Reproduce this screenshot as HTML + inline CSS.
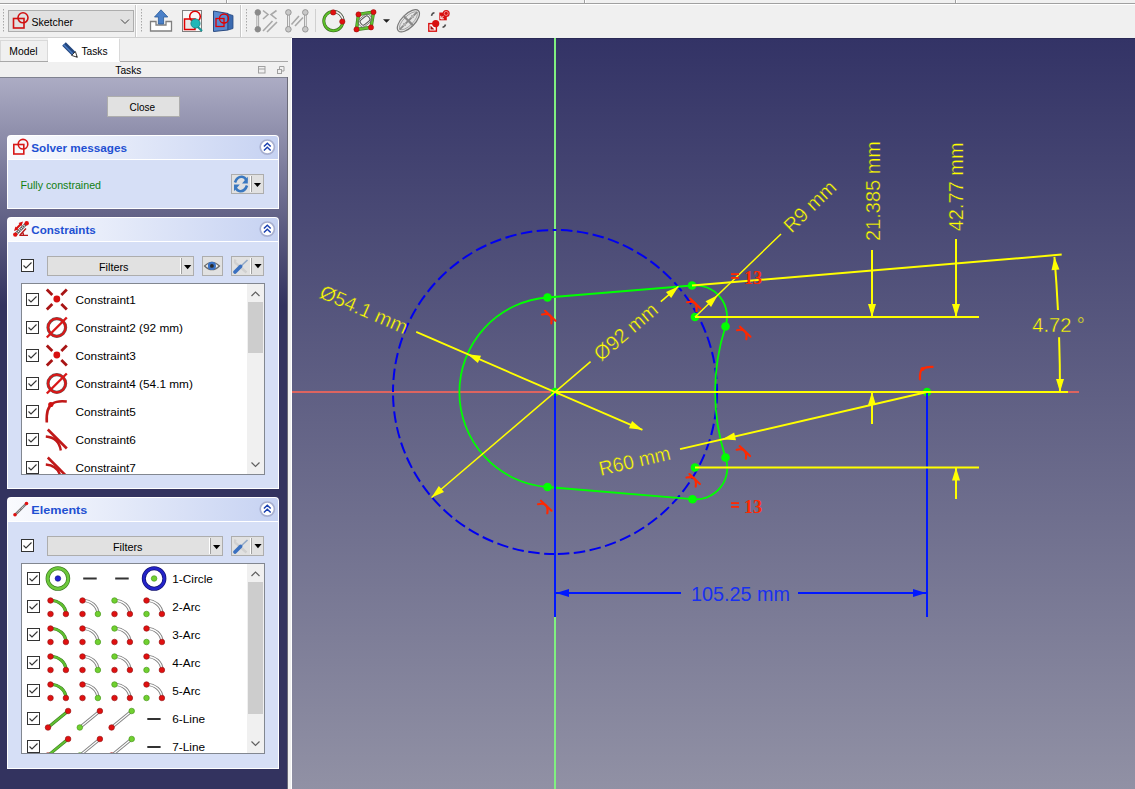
<!DOCTYPE html><html><head><meta charset="utf-8"><style>html,body{margin:0;padding:0;overflow:hidden;background:#f0f0f0}svg{display:block}text{font-family:"Liberation Sans",sans-serif}</style></head><body>
<svg width="1135" height="789" viewBox="0 0 1135 789">
<defs>
<linearGradient id="g3d" gradientUnits="userSpaceOnUse" x1="0" y1="38" x2="0" y2="854"><stop offset="0" stop-color="#333366"/><stop offset="1" stop-color="#9999aa"/></linearGradient>
<linearGradient id="gtp" gradientUnits="userSpaceOnUse" x1="0" y1="78" x2="0" y2="305"><stop offset="0" stop-color="#acacc4"/><stop offset="1" stop-color="#33335f"/></linearGradient>
<linearGradient id="ghdr" x1="0" y1="0" x2="1" y2="0"><stop offset="0" stop-color="#fafbfe"/><stop offset="1" stop-color="#c6d2f2"/></linearGradient>
</defs>
<rect x="0" y="0" width="1135" height="38" fill="#f0f0f0"/>
<rect x="0" y="3" width="1135" height="1" fill="#a0a0a0"/><rect x="0" y="4" width="1135" height="1" fill="#ffffff"/>
<rect x="226" y="0" width="1" height="3" fill="#a0a0a0"/><rect x="227" y="0" width="1" height="3" fill="#fff"/>
<rect x="584" y="0" width="1" height="3" fill="#a0a0a0"/><rect x="585" y="0" width="1" height="3" fill="#fff"/>
<rect x="955" y="0" width="1" height="3" fill="#a0a0a0"/><rect x="956" y="0" width="1" height="3" fill="#fff"/>
<rect x="0" y="37" width="292" height="1" fill="#d0d0d0"/>
<rect x="135" y="5" width="1" height="32" fill="#c8c8c8"/><rect x="136" y="5" width="1" height="32" fill="#fff"/>
<rect x="240" y="5" width="1" height="32" fill="#c8c8c8"/><rect x="241" y="5" width="1" height="32" fill="#fff"/>
<rect x="3" y="9" width="1" height="1.5" fill="#a8a8a8"/>
<rect x="3" y="12" width="1" height="1.5" fill="#a8a8a8"/>
<rect x="3" y="15" width="1" height="1.5" fill="#a8a8a8"/>
<rect x="3" y="18" width="1" height="1.5" fill="#a8a8a8"/>
<rect x="3" y="21" width="1" height="1.5" fill="#a8a8a8"/>
<rect x="3" y="24" width="1" height="1.5" fill="#a8a8a8"/>
<rect x="3" y="27" width="1" height="1.5" fill="#a8a8a8"/>
<rect x="3" y="30" width="1" height="1.5" fill="#a8a8a8"/>
<rect x="141" y="9" width="1" height="1.5" fill="#a8a8a8"/>
<rect x="141" y="12" width="1" height="1.5" fill="#a8a8a8"/>
<rect x="141" y="15" width="1" height="1.5" fill="#a8a8a8"/>
<rect x="141" y="18" width="1" height="1.5" fill="#a8a8a8"/>
<rect x="141" y="21" width="1" height="1.5" fill="#a8a8a8"/>
<rect x="141" y="24" width="1" height="1.5" fill="#a8a8a8"/>
<rect x="141" y="27" width="1" height="1.5" fill="#a8a8a8"/>
<rect x="141" y="30" width="1" height="1.5" fill="#a8a8a8"/>
<rect x="246" y="9" width="1" height="1.5" fill="#a8a8a8"/>
<rect x="246" y="12" width="1" height="1.5" fill="#a8a8a8"/>
<rect x="246" y="15" width="1" height="1.5" fill="#a8a8a8"/>
<rect x="246" y="18" width="1" height="1.5" fill="#a8a8a8"/>
<rect x="246" y="21" width="1" height="1.5" fill="#a8a8a8"/>
<rect x="246" y="24" width="1" height="1.5" fill="#a8a8a8"/>
<rect x="246" y="27" width="1" height="1.5" fill="#a8a8a8"/>
<rect x="246" y="30" width="1" height="1.5" fill="#a8a8a8"/>
<rect x="8.5" y="10.5" width="125" height="21" fill="#e1e1e1" stroke="#adadad"/>
<rect x="13.5" y="18.5" width="10.5" height="9.5" fill="none" stroke="#d01010" stroke-width="1.6"/><circle cx="23" cy="17.8" r="5" fill="none" stroke="#d01010" stroke-width="1.6"/>
<text x="31.5" y="25.8" font-size="11.5" fill="#000" textLength="41.5" lengthAdjust="spacingAndGlyphs">Sketcher</text>
<path d="M121 19.5 L125 23.5 L129 19.5" fill="none" stroke="#404040" stroke-width="1"/>
<path d="M150.5 21.5 H156 V25 H166 V21.5 H171.5 V31 H150.5 Z" fill="#fff" stroke="#808080" stroke-width="1.3"/>
<path d="M161 9.8 L167.8 17 H163.6 V24 H158.4 V17 H154.5 Z" fill="#4a80c8" stroke="#2a5a9a" stroke-width="0.8"/>
<rect x="182.5" y="10.5" width="19" height="21" fill="#f8f8f8" stroke="#808080"/>
<rect x="184.5" y="19" width="10.5" height="10.5" fill="#e8e8e8" stroke="#e00000" stroke-width="1.5"/><circle cx="195" cy="16.5" r="5.3" fill="none" stroke="#e00000" stroke-width="1.5"/>
<line x1="197" y1="26" x2="202" y2="31" stroke="#1a9a9a" stroke-width="2.2"/><circle cx="195.5" cy="23.5" r="4.6" fill="#20b8b8" stroke="#108080" stroke-width="0.8"/>
<path d="M213.5 11 L228 13.5 V30 L213.5 31.5 Z" fill="#5a8ad0" stroke="#2a4a80" stroke-width="1"/><path d="M228 14 L233 15.5 V28.5 L228 30 Z" fill="#3a6ab0" stroke="#2a4a80" stroke-width="0.8"/>
<rect x="216" y="18.5" width="8" height="8" fill="none" stroke="#e00000" stroke-width="1.3"/><circle cx="224" cy="18.5" r="4.5" fill="none" stroke="#e00000" stroke-width="1.3"/>
<line x1="257.8" y1="12.4" x2="257.8" y2="29.3" stroke="#909090" stroke-width="2.6"/><line x1="257.8" y1="12.4" x2="257.8" y2="29.3" stroke="#fafafa" stroke-width="1"/>
<circle cx="257.8" cy="12.4" r="2.8" fill="#8a8a8a" stroke="#8a8a8a" stroke-width="0.8"/><circle cx="257.8" cy="29.3" r="2.8" fill="#8a8a8a" stroke="#8a8a8a" stroke-width="0.8"/>
<path d="M263 10.5 L268 14.5 L263 19 M276.5 10.5 L271 14.5 L276.5 19" fill="none" stroke="#a8a8a8" stroke-width="1.6"/>
<path d="M263 31 L272.5 21 M267 32 L277 22" fill="none" stroke="#a8a8a8" stroke-width="1.6"/>
<line x1="288.4" y1="12.4" x2="288.4" y2="29.3" stroke="#909090" stroke-width="2.6"/><line x1="288.4" y1="12.4" x2="288.4" y2="29.3" stroke="#fafafa" stroke-width="1"/>
<circle cx="288.4" cy="12.4" r="2.8" fill="#c8c8c8" stroke="#8a8a8a" stroke-width="0.8"/><circle cx="288.4" cy="29.3" r="2.8" fill="#c8c8c8" stroke="#8a8a8a" stroke-width="0.8"/>
<line x1="305.3" y1="12.4" x2="305.3" y2="29.3" stroke="#909090" stroke-width="2.6"/><line x1="305.3" y1="12.4" x2="305.3" y2="29.3" stroke="#fafafa" stroke-width="1"/>
<circle cx="305.3" cy="12.4" r="2.8" fill="#c8c8c8" stroke="#8a8a8a" stroke-width="0.8"/><circle cx="305.3" cy="29.3" r="2.8" fill="#c8c8c8" stroke="#8a8a8a" stroke-width="0.8"/>
<path d="M291.5 24.5 L299 16 M295 26 L303 17.5" fill="none" stroke="#a8a8a8" stroke-width="1.6"/>
<rect x="315" y="9" width="1" height="23" fill="#d0d0d0"/>
<circle cx="333.4" cy="21.1" r="9.6" fill="none" stroke="#3a6a20" stroke-width="3"/><circle cx="333.4" cy="21.1" r="9.6" fill="none" stroke="#5cc028" stroke-width="1.9"/>
<path d="M333.4 11.5 A9.6 9.6 0 0 1 343 21.1" fill="none" stroke="#606060" stroke-width="2.8"/><path d="M333.4 11.5 A9.6 9.6 0 0 1 343 21.1" fill="none" stroke="#f4f4f4" stroke-width="1.5"/>
<circle cx="333.2" cy="12.4" r="2.7" fill="#e01010" stroke="#901010" stroke-width="0.5"/><circle cx="342.3" cy="21.6" r="2.7" fill="#e01010" stroke="#901010" stroke-width="0.5"/>
<path d="M358.5 14.4 L373.5 12.1 L371 27.4 L356.5 29.4 Z" fill="#f0f0f0" stroke="#3a7a20" stroke-width="3.4"/><path d="M358.5 14.4 L373.5 12.1 L371 27.4 L356.5 29.4 Z" fill="none" stroke="#60c030" stroke-width="2.2"/>
<rect x="360" y="17.5" width="10" height="6" rx="2" transform="rotate(-40 365 20.5)" fill="none" stroke="#505050" stroke-width="1"/><rect x="358" y="16" width="14" height="9" rx="3" transform="rotate(-40 365 20.5)" fill="none" stroke="#707070" stroke-width="0.8"/>
<circle cx="358.5" cy="14.4" r="2.6" fill="#e01010" stroke="#901010" stroke-width="0.5"/>
<circle cx="373.5" cy="12.1" r="2.6" fill="#e01010" stroke="#901010" stroke-width="0.5"/>
<circle cx="371" cy="27.4" r="2.6" fill="#e01010" stroke="#901010" stroke-width="0.5"/>
<circle cx="356.5" cy="29.4" r="2.6" fill="#e01010" stroke="#901010" stroke-width="0.5"/>
<path d="M383 19.2 H390 L386.5 22.7 Z" fill="#202020"/>
<ellipse cx="408.4" cy="20.8" rx="14.2" ry="6.6" transform="rotate(-45 408.4 20.8)" fill="#e4e4e4" stroke="#7a7a7a" stroke-width="1.2"/>
<ellipse cx="408.4" cy="20.8" rx="11.8" ry="4.6" transform="rotate(-45 408.4 20.8)" fill="none" stroke="#a0a0a0" stroke-width="0.9"/>
<line x1="399.5" y1="29.7" x2="417.3" y2="11.9" stroke="#8a8a8a" stroke-width="1.8"/><line x1="403.6" y1="16" x2="413.2" y2="25.6" stroke="#8a8a8a" stroke-width="2.2"/>
<rect x="403" y="23" width="3" height="3" fill="#b0b0b0"/><rect x="411" y="15" width="3" height="3" fill="#b0b0b0"/>
<rect x="428.8" y="23.6" width="7.6" height="7.6" fill="#fff" stroke="#d81010" stroke-width="1.4"/><path d="M430.5 25.5 V29.5 H434.5 Z" fill="#a01010"/><circle cx="435.7" cy="23.6" r="3.6" fill="#d81010"/>
<rect x="439.3" y="12.5" width="7.5" height="7.8" fill="#d81010"/><path d="M440.8 18.8 L444.5 15 M440.8 18.8 V15.8 M440.8 18.8 H443.8" fill="none" stroke="#fff" stroke-width="1"/><circle cx="446.2" cy="13.4" r="3.5" fill="#d81010"/><circle cx="446.2" cy="13.4" r="2" fill="none" stroke="#f4a0a0" stroke-width="0.8"/>
<path d="M431.5 15.8 Q432 13 434.5 12.8" fill="none" stroke="#505050" stroke-width="1.5"/><path d="M445.5 24.5 Q445 27 442.5 27.2" fill="none" stroke="#505050" stroke-width="1.5"/>
<rect x="0" y="38" width="292" height="751" fill="#f0f0f0"/>
<rect x="0.5" y="40.5" width="47" height="21" fill="#f0f0f0" stroke="#d9d9d9"/>
<rect x="48" y="38" width="71" height="24" fill="#ffffff"/><rect x="119" y="39" width="1" height="22" fill="#d9d9d9"/>
<rect x="0" y="61" width="48" height="1" fill="#a8a8a8"/><rect x="120" y="61" width="168" height="1" fill="#a8a8a8"/>
<text x="9.3" y="54.8" font-size="11.5" fill="#000" textLength="28.2" lengthAdjust="spacingAndGlyphs">Model</text>
<text x="81.4" y="54.8" font-size="11.5" fill="#000" textLength="26.1" lengthAdjust="spacingAndGlyphs">Tasks</text>
<path d="M64 44 L73.5 53.5" stroke="#22467e" stroke-width="5.2" stroke-linecap="butt"/><path d="M63.5 44.5 L73 54" stroke="#4a7cc4" stroke-width="1.4"/><path d="M71.6 55.4 L75.4 51.6 L77.3 57.3 Z" fill="#fff" stroke="#222" stroke-width="0.9"/><path d="M77.3 57.3 L75.8 56.6 L76.6 55.8 Z" fill="#111"/>
<text x="115.3" y="73.7" font-size="11.5" fill="#000" textLength="26.1" lengthAdjust="spacingAndGlyphs">Tasks</text>
<rect x="258.5" y="66.5" width="6.5" height="6.5" fill="none" stroke="#a0a0a0" stroke-width="1"/><rect x="258.5" y="68.5" width="6.5" height="1" fill="#a0a0a0"/>
<rect x="277.5" y="69.5" width="4" height="4" fill="none" stroke="#a0a0a0"/><path d="M279.5 69.5 V66.5 H284 V71 H281.5" fill="none" stroke="#a0a0a0"/>
<rect x="0" y="77" width="288" height="712" fill="url(#gtp)"/>
<rect x="0" y="77" width="288" height="1" fill="#7f8290"/><rect x="287" y="77" width="1" height="712" fill="#6a6a78"/>
<rect x="288" y="38" width="4" height="751" fill="#f0f0f0"/><rect x="291" y="38" width="1" height="751" fill="#ffffff"/>
<rect x="107.5" y="96.5" width="72" height="20" fill="#e1e1e1" stroke="#adadad"/>
<text x="129.5" y="111" font-size="11.5" fill="#000" textLength="25.6" lengthAdjust="spacingAndGlyphs">Close</text>
<path d="M7 209 V139 Q7 135 11 135 H275 Q279 135 279 139 V209 Z" fill="#ffffff"/>
<path d="M8 159 V139 Q8 136 11 136 H275 Q278 136 278 139 V159 Z" fill="url(#ghdr)"/>
<rect x="8" y="160" width="270" height="48" fill="#d6dff6"/>
<text x="31.3" y="152.2" font-size="11.7" font-weight="bold" fill="#1f50d2" textLength="95.6" lengthAdjust="spacingAndGlyphs">Solver messages</text>
<circle cx="267.3" cy="147.1" r="7.1" fill="#fff" stroke="#a8b0d0" stroke-width="1.7"/>
<path d="M263.9 146.5 L267.3 143.29999999999998 L270.7 146.5 M263.9 150.5 L267.3 147.29999999999998 L270.7 150.5" fill="none" stroke="#1a40b0" stroke-width="1.5"/>
<path d="M7 489 V221 Q7 217 11 217 H275 Q279 217 279 221 V489 Z" fill="#ffffff"/>
<path d="M8 241 V221 Q8 218 11 218 H275 Q278 218 278 221 V241 Z" fill="url(#ghdr)"/>
<rect x="8" y="242" width="270" height="246" fill="#d6dff6"/>
<text x="31.3" y="234.2" font-size="11.7" font-weight="bold" fill="#1f50d2" textLength="64.4" lengthAdjust="spacingAndGlyphs">Constraints</text>
<circle cx="267.3" cy="229.1" r="7.1" fill="#fff" stroke="#a8b0d0" stroke-width="1.7"/>
<path d="M263.9 228.5 L267.3 225.29999999999998 L270.7 228.5 M263.9 232.5 L267.3 229.29999999999998 L270.7 232.5" fill="none" stroke="#1a40b0" stroke-width="1.5"/>
<path d="M7 769 V501 Q7 497 11 497 H275 Q279 497 279 501 V769 Z" fill="#ffffff"/>
<path d="M8 521 V501 Q8 498 11 498 H275 Q278 498 278 501 V521 Z" fill="url(#ghdr)"/>
<rect x="8" y="522" width="270" height="246" fill="#d6dff6"/>
<text x="31.3" y="514.2" font-size="11.7" font-weight="bold" fill="#1f50d2" textLength="56" lengthAdjust="spacingAndGlyphs">Elements</text>
<circle cx="267.3" cy="509.1" r="7.1" fill="#fff" stroke="#a8b0d0" stroke-width="1.7"/>
<path d="M263.9 508.5 L267.3 505.3 L270.7 508.5 M263.9 512.5 L267.3 509.3 L270.7 512.5" fill="none" stroke="#1a40b0" stroke-width="1.5"/>
<rect x="13.8" y="144.5" width="10" height="9.5" fill="none" stroke="#d81818" stroke-width="1.6"/><circle cx="23" cy="144.2" r="4.8" fill="none" stroke="#d81818" stroke-width="1.6"/>
<text x="20.5" y="188.6" font-size="11" fill="#108010" textLength="80.5" lengthAdjust="spacingAndGlyphs">Fully constrained</text>
<rect x="231.5" y="174.5" width="32" height="19" fill="#e1e1e1" stroke="#adadad"/><rect x="250" y="176" width="1" height="16" fill="#fff"/><rect x="251" y="176" width="1" height="16" fill="#a0a0a0"/>
<path d="M253.9 182.9 H261 L257.45 187.1 Z" fill="#000"/>
<path d="M235 182.5 Q237 176.5 242 176.8 Q245 177 246.5 180.5" fill="none" stroke="#3a78c0" stroke-width="2.6"/><path d="M247.8 176.8 V183.6 H242 Z" fill="#3a78c0"/>
<path d="M247 185.5 Q245 191.5 240 191.2 Q237 191 235.5 187.5" fill="none" stroke="#3a78c0" stroke-width="2.6"/><path d="M234 191.2 V184.4 H239.8 Z" fill="#3a78c0"/>
<line x1="15.3" y1="234.6" x2="26.7" y2="223.2" stroke="#505050" stroke-width="3"/><line x1="15.3" y1="234.6" x2="26.7" y2="223.2" stroke="#fff" stroke-width="1.6" stroke-dasharray="1 1"/>
<line x1="16.5" y1="228.5" x2="21" y2="224" stroke="#d81010" stroke-width="2.2"/><path d="M14 231 L15.5 226.5 L18.5 229.5 Z M23 221.5 L18.5 223 L21.5 226 Z" fill="#d81010"/>
<circle cx="15.3" cy="234.6" r="2.2" fill="#e01010"/><circle cx="26.7" cy="223.2" r="2.2" fill="#e01010"/><path d="M19.3 235.4 H28 M19.8 235.2 L26 228.5 M23.5 235.2 Q23.5 232.5 22 231.8" fill="none" stroke="#b81818" stroke-width="1.4"/>
<line x1="15" y1="514.8" x2="26.5" y2="503.5" stroke="#707070" stroke-width="2.4"/><line x1="15" y1="514.8" x2="26.5" y2="503.5" stroke="#fff" stroke-width="0.9" stroke-dasharray="1 1"/><circle cx="15" cy="514.8" r="1.8" fill="#e01010"/><circle cx="26.5" cy="503.5" r="1.8" fill="#e01010"/>
<rect x="21.5" y="259.5" width="12" height="12" fill="#fff" stroke="#333"/>
<path d="M23.5 265.5 L26 268 L31.5 262.5" fill="none" stroke="#333" stroke-width="1.1"/>
<rect x="47.5" y="256.5" width="146" height="19" fill="#e1e1e1" stroke="#adadad"/><rect x="180" y="258" width="1" height="16" fill="#fff"/><rect x="181" y="258" width="1" height="16" fill="#a0a0a0"/>
<path d="M184 265.1 H191.3 L187.65 269.2 Z" fill="#000"/>
<text x="99" y="270.5" font-size="11.5" fill="#000" textLength="29.5" lengthAdjust="spacingAndGlyphs">Filters</text>
<rect x="202.5" y="256.5" width="20" height="19" fill="#e1e1e1" stroke="#adadad"/>
<path d="M204.5 266 Q212 258.5 219.5 266 Q212 273.5 204.5 266 Z" fill="#f8f8f4" stroke="#6a6a6a" stroke-width="1.1"/><circle cx="211.9" cy="265.9" r="4.1" fill="#3a72c4"/><circle cx="211.9" cy="265.9" r="1.9" fill="#2a2a2a"/>
<rect x="231.5" y="256.5" width="32" height="19" fill="#e1e1e1" stroke="#adadad"/>
<rect x="250" y="258" width="1" height="16" fill="#fff"/><rect x="251" y="258" width="1" height="16" fill="#a0a0a0"/>
<path d="M254.4 264.0 H261.6 L258.0 268.2 Z" fill="#000"/>
<path d="M235.5 259.5 Q234 263 237 264 L246.5 272.5" fill="none" stroke="#d0d0d0" stroke-width="2.4"/>
<line x1="240.5" y1="266.5" x2="247.5" y2="260" stroke="#90a8c8" stroke-width="1.6"/>
<line x1="235" y1="272" x2="240.5" y2="266.5" stroke="#3a70c0" stroke-width="3.8" stroke-linecap="round"/>
<rect x="21.5" y="539.5" width="12" height="12" fill="#fff" stroke="#333"/>
<path d="M23.5 545.5 L26 548 L31.5 542.5" fill="none" stroke="#333" stroke-width="1.1"/>
<rect x="47.5" y="536.5" width="175" height="19" fill="#e1e1e1" stroke="#adadad"/><rect x="209" y="538" width="1" height="16" fill="#fff"/><rect x="210" y="538" width="1" height="16" fill="#a0a0a0"/>
<path d="M213 545.1 H220.3 L216.65 549.2 Z" fill="#000"/>
<text x="113" y="550.5" font-size="11.5" fill="#000" textLength="29.5" lengthAdjust="spacingAndGlyphs">Filters</text>
<rect x="231.5" y="536.5" width="32" height="19" fill="#e1e1e1" stroke="#adadad"/>
<rect x="250" y="538" width="1" height="16" fill="#fff"/><rect x="251" y="538" width="1" height="16" fill="#a0a0a0"/>
<path d="M254.4 544.0 H261.6 L258.0 548.2 Z" fill="#000"/>
<path d="M235.5 539.5 Q234 543 237 544 L246.5 552.5" fill="none" stroke="#d0d0d0" stroke-width="2.4"/>
<line x1="240.5" y1="546.5" x2="247.5" y2="540" stroke="#90a8c8" stroke-width="1.6"/>
<line x1="235" y1="552" x2="240.5" y2="546.5" stroke="#3a70c0" stroke-width="3.8" stroke-linecap="round"/>
<rect x="21.5" y="283.5" width="243" height="191" fill="#fff" stroke="#828790"/>
<rect x="247" y="284" width="17" height="190" fill="#f0f0f0"/>
<rect x="248" y="302" width="15" height="51" fill="#cdcdcd"/>
<path d="M251.5 296 L255.5 292 L259.5 296" fill="none" stroke="#606060" stroke-width="1.2"/>
<path d="M251.5 462.5 L255.5 466.5 L259.5 462.5" fill="none" stroke="#606060" stroke-width="1.2"/>
<clipPath id="cl1"><rect x="22" y="284" width="225" height="190"/></clipPath>
<clipPath id="cl2"><rect x="22" y="564" width="225" height="189"/></clipPath>
<g clip-path="url(#cl1)">
<rect x="26.5" y="293.5" width="12" height="12" fill="#fff" stroke="#333"/>
<path d="M28.5 299.5 L31 302.0 L36.5 296.5" fill="none" stroke="#333" stroke-width="1.1"/>
<text x="75.5" y="303.9" font-size="11.8" fill="#000">Constraint1</text>
<g stroke="#a81414" stroke-width="2.8"><line x1="46.8" y1="289.5" x2="52.3" y2="295.0"/><line x1="66.8" y1="289.5" x2="61.3" y2="295.0"/><line x1="46.8" y1="309.5" x2="52.3" y2="304.0"/><line x1="66.8" y1="309.5" x2="61.3" y2="304.0"/></g><circle cx="56.8" cy="299.0" r="3.4" fill="#d81010"/>
<rect x="26.5" y="321.5" width="12" height="12" fill="#fff" stroke="#333"/>
<path d="M28.5 327.5 L31 330.0 L36.5 324.5" fill="none" stroke="#333" stroke-width="1.1"/>
<text x="75.5" y="331.9" font-size="11.8" fill="#000">Constraint2 (92 mm)</text>
<circle cx="56.8" cy="327.5" r="8.8" fill="none" stroke="#606060" stroke-width="3.2"/><circle cx="56.8" cy="327.5" r="8.8" fill="none" stroke="#d81818" stroke-width="2.2"/><line x1="46.8" y1="337.5" x2="66.8" y2="317.5" stroke="#d81818" stroke-width="2.4"/>
<rect x="26.5" y="349.5" width="12" height="12" fill="#fff" stroke="#333"/>
<path d="M28.5 355.5 L31 358.0 L36.5 352.5" fill="none" stroke="#333" stroke-width="1.1"/>
<text x="75.5" y="359.9" font-size="11.8" fill="#000">Constraint3</text>
<g stroke="#a81414" stroke-width="2.8"><line x1="46.8" y1="345.5" x2="52.3" y2="351.0"/><line x1="66.8" y1="345.5" x2="61.3" y2="351.0"/><line x1="46.8" y1="365.5" x2="52.3" y2="360.0"/><line x1="66.8" y1="365.5" x2="61.3" y2="360.0"/></g><circle cx="56.8" cy="355.0" r="3.4" fill="#d81010"/>
<rect x="26.5" y="377.5" width="12" height="12" fill="#fff" stroke="#333"/>
<path d="M28.5 383.5 L31 386.0 L36.5 380.5" fill="none" stroke="#333" stroke-width="1.1"/>
<text x="75.5" y="387.9" font-size="11.8" fill="#000">Constraint4 (54.1 mm)</text>
<circle cx="56.8" cy="383.5" r="8.8" fill="none" stroke="#606060" stroke-width="3.2"/><circle cx="56.8" cy="383.5" r="8.8" fill="none" stroke="#d81818" stroke-width="2.2"/><line x1="46.8" y1="393.5" x2="66.8" y2="373.5" stroke="#d81818" stroke-width="2.4"/>
<rect x="26.5" y="405.5" width="12" height="12" fill="#fff" stroke="#333"/>
<path d="M28.5 411.5 L31 414.0 L36.5 408.5" fill="none" stroke="#333" stroke-width="1.1"/>
<text x="75.5" y="415.9" font-size="11.8" fill="#000">Constraint5</text>
<path d="M46.8 422.5 Q45.8 407.5 52.8 403.5 Q56.8 400.5 66.8 401.5" fill="none" stroke="#c01818" stroke-width="2.6"/><circle cx="50.8" cy="404.5" r="2.6" fill="#d01010"/>
<rect x="26.5" y="433.5" width="12" height="12" fill="#fff" stroke="#333"/>
<path d="M28.5 439.5 L31 442.0 L36.5 436.5" fill="none" stroke="#333" stroke-width="1.1"/>
<text x="75.5" y="443.9" font-size="11.8" fill="#000">Constraint6</text>
<line x1="47.8" y1="429.5" x2="66.8" y2="448.5" stroke="#c01818" stroke-width="2.6"/><path d="M45.8 436.5 Q58.8 437.5 60.8 450.5" fill="none" stroke="#c01818" stroke-width="2.4"/>
<rect x="26.5" y="461.5" width="12" height="12" fill="#fff" stroke="#333"/>
<path d="M28.5 467.5 L31 470.0 L36.5 464.5" fill="none" stroke="#333" stroke-width="1.1"/>
<text x="75.5" y="471.9" font-size="11.8" fill="#000">Constraint7</text>
<line x1="47.8" y1="457.5" x2="66.8" y2="476.5" stroke="#c01818" stroke-width="2.6"/><path d="M45.8 464.5 Q58.8 465.5 60.8 478.5" fill="none" stroke="#c01818" stroke-width="2.4"/>
</g>
<rect x="21.5" y="563.5" width="243" height="190" fill="#fff" stroke="#828790"/>
<rect x="247" y="564" width="17" height="189" fill="#f0f0f0"/>
<rect x="248" y="582" width="15" height="132" fill="#cdcdcd"/>
<path d="M251.5 576 L255.5 572 L259.5 576" fill="none" stroke="#606060" stroke-width="1.2"/>
<path d="M251.5 741.5 L255.5 745.5 L259.5 741.5" fill="none" stroke="#606060" stroke-width="1.2"/>
<g clip-path="url(#cl2)">
<rect x="27.5" y="572.5" width="12" height="12" fill="#fff" stroke="#333"/>
<path d="M29.5 578.5 L32 581.0 L37.5 575.5" fill="none" stroke="#333" stroke-width="1.1"/>
<text x="172.3" y="582.9" font-size="11.8" fill="#000">1-Circle</text>
<circle cx="57.9" cy="578.5" r="10.3" fill="none" stroke="#3a7a20" stroke-width="4"/><circle cx="57.9" cy="578.5" r="10.3" fill="none" stroke="#6cc83a" stroke-width="2.6"/>
<circle cx="57.9" cy="578.5" r="2.8" fill="#2020d0" stroke="#101080" stroke-width="0.6"/>
<rect x="83.2" y="577.5" width="13.5" height="2" fill="#333"/><rect x="115.2" y="577.5" width="13.5" height="2" fill="#333"/>
<circle cx="154.1" cy="578.5" r="10.3" fill="none" stroke="#101070" stroke-width="4"/><circle cx="154.1" cy="578.5" r="10.3" fill="none" stroke="#2424c8" stroke-width="2.6"/>
<circle cx="154.1" cy="578.5" r="2.8" fill="#70d030" stroke="#409010" stroke-width="0.6"/>
<rect x="27.5" y="600.5" width="12" height="12" fill="#fff" stroke="#333"/>
<path d="M29.5 606.5 L32 609.0 L37.5 603.5" fill="none" stroke="#333" stroke-width="1.1"/>
<text x="172.3" y="610.9" font-size="11.8" fill="#000">2-Arc</text>
<path d="M50.5 600.5 A15 13.5 0 0 1 65.9 614.0" fill="none" stroke="#3a7a20" stroke-width="3.2"/><path d="M50.5 600.5 A15 13.5 0 0 1 65.9 614.0" fill="none" stroke="#60c030" stroke-width="2.2"/>
<circle cx="50.5" cy="600.5" r="2.8" fill="#e01010" stroke="#901010" stroke-width="0.6"/>
<circle cx="50.5" cy="614.0" r="2.8" fill="#e01010" stroke="#901010" stroke-width="0.6"/>
<circle cx="65.9" cy="614.0" r="2.8" fill="#e01010" stroke="#901010" stroke-width="0.6"/>
<path d="M82.5 600.5 A15 13.5 0 0 1 97.9 614.0" fill="none" stroke="#808080" stroke-width="3.2"/><path d="M82.5 600.5 A15 13.5 0 0 1 97.9 614.0" fill="none" stroke="#fff" stroke-width="1.4"/>
<circle cx="82.5" cy="600.5" r="2.8" fill="#e01010" stroke="#901010" stroke-width="0.6"/>
<circle cx="82.5" cy="614.0" r="2.8" fill="#e01010" stroke="#901010" stroke-width="0.6"/>
<circle cx="97.9" cy="614.0" r="2.8" fill="#70d030" stroke="#409010" stroke-width="0.6"/>
<path d="M114.5 600.5 A15 13.5 0 0 1 129.9 614.0" fill="none" stroke="#808080" stroke-width="3.2"/><path d="M114.5 600.5 A15 13.5 0 0 1 129.9 614.0" fill="none" stroke="#fff" stroke-width="1.4"/>
<circle cx="114.5" cy="600.5" r="2.8" fill="#70d030" stroke="#409010" stroke-width="0.6"/>
<circle cx="114.5" cy="614.0" r="2.8" fill="#e01010" stroke="#901010" stroke-width="0.6"/>
<circle cx="129.9" cy="614.0" r="2.8" fill="#e01010" stroke="#901010" stroke-width="0.6"/>
<path d="M146.5 600.5 A15 13.5 0 0 1 161.9 614.0" fill="none" stroke="#808080" stroke-width="3.2"/><path d="M146.5 600.5 A15 13.5 0 0 1 161.9 614.0" fill="none" stroke="#fff" stroke-width="1.4"/>
<circle cx="146.5" cy="600.5" r="2.8" fill="#e01010" stroke="#901010" stroke-width="0.6"/>
<circle cx="146.5" cy="614.0" r="2.8" fill="#70d030" stroke="#409010" stroke-width="0.6"/>
<circle cx="161.9" cy="614.0" r="2.8" fill="#e01010" stroke="#901010" stroke-width="0.6"/>
<rect x="27.5" y="628.5" width="12" height="12" fill="#fff" stroke="#333"/>
<path d="M29.5 634.5 L32 637.0 L37.5 631.5" fill="none" stroke="#333" stroke-width="1.1"/>
<text x="172.3" y="638.9" font-size="11.8" fill="#000">3-Arc</text>
<path d="M50.5 628.5 A15 13.5 0 0 1 65.9 642.0" fill="none" stroke="#3a7a20" stroke-width="3.2"/><path d="M50.5 628.5 A15 13.5 0 0 1 65.9 642.0" fill="none" stroke="#60c030" stroke-width="2.2"/>
<circle cx="50.5" cy="628.5" r="2.8" fill="#e01010" stroke="#901010" stroke-width="0.6"/>
<circle cx="50.5" cy="642.0" r="2.8" fill="#e01010" stroke="#901010" stroke-width="0.6"/>
<circle cx="65.9" cy="642.0" r="2.8" fill="#e01010" stroke="#901010" stroke-width="0.6"/>
<path d="M82.5 628.5 A15 13.5 0 0 1 97.9 642.0" fill="none" stroke="#808080" stroke-width="3.2"/><path d="M82.5 628.5 A15 13.5 0 0 1 97.9 642.0" fill="none" stroke="#fff" stroke-width="1.4"/>
<circle cx="82.5" cy="628.5" r="2.8" fill="#e01010" stroke="#901010" stroke-width="0.6"/>
<circle cx="82.5" cy="642.0" r="2.8" fill="#e01010" stroke="#901010" stroke-width="0.6"/>
<circle cx="97.9" cy="642.0" r="2.8" fill="#70d030" stroke="#409010" stroke-width="0.6"/>
<path d="M114.5 628.5 A15 13.5 0 0 1 129.9 642.0" fill="none" stroke="#808080" stroke-width="3.2"/><path d="M114.5 628.5 A15 13.5 0 0 1 129.9 642.0" fill="none" stroke="#fff" stroke-width="1.4"/>
<circle cx="114.5" cy="628.5" r="2.8" fill="#70d030" stroke="#409010" stroke-width="0.6"/>
<circle cx="114.5" cy="642.0" r="2.8" fill="#e01010" stroke="#901010" stroke-width="0.6"/>
<circle cx="129.9" cy="642.0" r="2.8" fill="#e01010" stroke="#901010" stroke-width="0.6"/>
<path d="M146.5 628.5 A15 13.5 0 0 1 161.9 642.0" fill="none" stroke="#808080" stroke-width="3.2"/><path d="M146.5 628.5 A15 13.5 0 0 1 161.9 642.0" fill="none" stroke="#fff" stroke-width="1.4"/>
<circle cx="146.5" cy="628.5" r="2.8" fill="#e01010" stroke="#901010" stroke-width="0.6"/>
<circle cx="146.5" cy="642.0" r="2.8" fill="#70d030" stroke="#409010" stroke-width="0.6"/>
<circle cx="161.9" cy="642.0" r="2.8" fill="#e01010" stroke="#901010" stroke-width="0.6"/>
<rect x="27.5" y="656.5" width="12" height="12" fill="#fff" stroke="#333"/>
<path d="M29.5 662.5 L32 665.0 L37.5 659.5" fill="none" stroke="#333" stroke-width="1.1"/>
<text x="172.3" y="666.9" font-size="11.8" fill="#000">4-Arc</text>
<path d="M50.5 656.5 A15 13.5 0 0 1 65.9 670.0" fill="none" stroke="#3a7a20" stroke-width="3.2"/><path d="M50.5 656.5 A15 13.5 0 0 1 65.9 670.0" fill="none" stroke="#60c030" stroke-width="2.2"/>
<circle cx="50.5" cy="656.5" r="2.8" fill="#e01010" stroke="#901010" stroke-width="0.6"/>
<circle cx="50.5" cy="670.0" r="2.8" fill="#e01010" stroke="#901010" stroke-width="0.6"/>
<circle cx="65.9" cy="670.0" r="2.8" fill="#e01010" stroke="#901010" stroke-width="0.6"/>
<path d="M82.5 656.5 A15 13.5 0 0 1 97.9 670.0" fill="none" stroke="#808080" stroke-width="3.2"/><path d="M82.5 656.5 A15 13.5 0 0 1 97.9 670.0" fill="none" stroke="#fff" stroke-width="1.4"/>
<circle cx="82.5" cy="656.5" r="2.8" fill="#e01010" stroke="#901010" stroke-width="0.6"/>
<circle cx="82.5" cy="670.0" r="2.8" fill="#e01010" stroke="#901010" stroke-width="0.6"/>
<circle cx="97.9" cy="670.0" r="2.8" fill="#70d030" stroke="#409010" stroke-width="0.6"/>
<path d="M114.5 656.5 A15 13.5 0 0 1 129.9 670.0" fill="none" stroke="#808080" stroke-width="3.2"/><path d="M114.5 656.5 A15 13.5 0 0 1 129.9 670.0" fill="none" stroke="#fff" stroke-width="1.4"/>
<circle cx="114.5" cy="656.5" r="2.8" fill="#70d030" stroke="#409010" stroke-width="0.6"/>
<circle cx="114.5" cy="670.0" r="2.8" fill="#e01010" stroke="#901010" stroke-width="0.6"/>
<circle cx="129.9" cy="670.0" r="2.8" fill="#e01010" stroke="#901010" stroke-width="0.6"/>
<path d="M146.5 656.5 A15 13.5 0 0 1 161.9 670.0" fill="none" stroke="#808080" stroke-width="3.2"/><path d="M146.5 656.5 A15 13.5 0 0 1 161.9 670.0" fill="none" stroke="#fff" stroke-width="1.4"/>
<circle cx="146.5" cy="656.5" r="2.8" fill="#e01010" stroke="#901010" stroke-width="0.6"/>
<circle cx="146.5" cy="670.0" r="2.8" fill="#70d030" stroke="#409010" stroke-width="0.6"/>
<circle cx="161.9" cy="670.0" r="2.8" fill="#e01010" stroke="#901010" stroke-width="0.6"/>
<rect x="27.5" y="684.5" width="12" height="12" fill="#fff" stroke="#333"/>
<path d="M29.5 690.5 L32 693.0 L37.5 687.5" fill="none" stroke="#333" stroke-width="1.1"/>
<text x="172.3" y="694.9" font-size="11.8" fill="#000">5-Arc</text>
<path d="M50.5 684.5 A15 13.5 0 0 1 65.9 698.0" fill="none" stroke="#3a7a20" stroke-width="3.2"/><path d="M50.5 684.5 A15 13.5 0 0 1 65.9 698.0" fill="none" stroke="#60c030" stroke-width="2.2"/>
<circle cx="50.5" cy="684.5" r="2.8" fill="#e01010" stroke="#901010" stroke-width="0.6"/>
<circle cx="50.5" cy="698.0" r="2.8" fill="#e01010" stroke="#901010" stroke-width="0.6"/>
<circle cx="65.9" cy="698.0" r="2.8" fill="#e01010" stroke="#901010" stroke-width="0.6"/>
<path d="M82.5 684.5 A15 13.5 0 0 1 97.9 698.0" fill="none" stroke="#808080" stroke-width="3.2"/><path d="M82.5 684.5 A15 13.5 0 0 1 97.9 698.0" fill="none" stroke="#fff" stroke-width="1.4"/>
<circle cx="82.5" cy="684.5" r="2.8" fill="#e01010" stroke="#901010" stroke-width="0.6"/>
<circle cx="82.5" cy="698.0" r="2.8" fill="#e01010" stroke="#901010" stroke-width="0.6"/>
<circle cx="97.9" cy="698.0" r="2.8" fill="#70d030" stroke="#409010" stroke-width="0.6"/>
<path d="M114.5 684.5 A15 13.5 0 0 1 129.9 698.0" fill="none" stroke="#808080" stroke-width="3.2"/><path d="M114.5 684.5 A15 13.5 0 0 1 129.9 698.0" fill="none" stroke="#fff" stroke-width="1.4"/>
<circle cx="114.5" cy="684.5" r="2.8" fill="#70d030" stroke="#409010" stroke-width="0.6"/>
<circle cx="114.5" cy="698.0" r="2.8" fill="#e01010" stroke="#901010" stroke-width="0.6"/>
<circle cx="129.9" cy="698.0" r="2.8" fill="#e01010" stroke="#901010" stroke-width="0.6"/>
<path d="M146.5 684.5 A15 13.5 0 0 1 161.9 698.0" fill="none" stroke="#808080" stroke-width="3.2"/><path d="M146.5 684.5 A15 13.5 0 0 1 161.9 698.0" fill="none" stroke="#fff" stroke-width="1.4"/>
<circle cx="146.5" cy="684.5" r="2.8" fill="#e01010" stroke="#901010" stroke-width="0.6"/>
<circle cx="146.5" cy="698.0" r="2.8" fill="#70d030" stroke="#409010" stroke-width="0.6"/>
<circle cx="161.9" cy="698.0" r="2.8" fill="#e01010" stroke="#901010" stroke-width="0.6"/>
<rect x="27.5" y="712.5" width="12" height="12" fill="#fff" stroke="#333"/>
<path d="M29.5 718.5 L32 721.0 L37.5 715.5" fill="none" stroke="#333" stroke-width="1.1"/>
<text x="172.3" y="722.9" font-size="11.8" fill="#000">6-Line</text>
<path d="M48.0 727.5 L68.1 711.0" fill="none" stroke="#3a7a20" stroke-width="3"/><path d="M48.0 727.5 L68.1 711.0" fill="none" stroke="#60c030" stroke-width="2"/>
<circle cx="48.0" cy="727.5" r="2.8" fill="#e01010" stroke="#901010" stroke-width="0.6"/>
<circle cx="68.1" cy="711.0" r="2.8" fill="#e01010" stroke="#901010" stroke-width="0.6"/>
<path d="M79.8 727.5 L99.9 711.0" fill="none" stroke="#808080" stroke-width="3"/><path d="M79.8 727.5 L99.9 711.0" fill="none" stroke="#fff" stroke-width="1.2"/>
<circle cx="79.8" cy="727.5" r="2.8" fill="#70d030" stroke="#409010" stroke-width="0.6"/>
<circle cx="99.9" cy="711.0" r="2.8" fill="#e01010" stroke="#901010" stroke-width="0.6"/>
<path d="M111.6 727.5 L131.7 711.0" fill="none" stroke="#808080" stroke-width="3"/><path d="M111.6 727.5 L131.7 711.0" fill="none" stroke="#fff" stroke-width="1.2"/>
<circle cx="111.6" cy="727.5" r="2.8" fill="#e01010" stroke="#901010" stroke-width="0.6"/>
<circle cx="131.7" cy="711.0" r="2.8" fill="#70d030" stroke="#409010" stroke-width="0.6"/>
<rect x="147.3" y="718.0" width="13.3" height="2" fill="#333"/>
<rect x="27.5" y="740.5" width="12" height="12" fill="#fff" stroke="#333"/>
<path d="M29.5 746.5 L32 749.0 L37.5 743.5" fill="none" stroke="#333" stroke-width="1.1"/>
<text x="172.3" y="750.9" font-size="11.8" fill="#000">7-Line</text>
<path d="M48.0 755.5 L68.1 739.0" fill="none" stroke="#3a7a20" stroke-width="3"/><path d="M48.0 755.5 L68.1 739.0" fill="none" stroke="#60c030" stroke-width="2"/>
<circle cx="48.0" cy="755.5" r="2.8" fill="#e01010" stroke="#901010" stroke-width="0.6"/>
<circle cx="68.1" cy="739.0" r="2.8" fill="#e01010" stroke="#901010" stroke-width="0.6"/>
<path d="M79.8 755.5 L99.9 739.0" fill="none" stroke="#808080" stroke-width="3"/><path d="M79.8 755.5 L99.9 739.0" fill="none" stroke="#fff" stroke-width="1.2"/>
<circle cx="79.8" cy="755.5" r="2.8" fill="#70d030" stroke="#409010" stroke-width="0.6"/>
<circle cx="99.9" cy="739.0" r="2.8" fill="#e01010" stroke="#901010" stroke-width="0.6"/>
<path d="M111.6 755.5 L131.7 739.0" fill="none" stroke="#808080" stroke-width="3"/><path d="M111.6 755.5 L131.7 739.0" fill="none" stroke="#fff" stroke-width="1.2"/>
<circle cx="111.6" cy="755.5" r="2.8" fill="#e01010" stroke="#901010" stroke-width="0.6"/>
<circle cx="131.7" cy="739.0" r="2.8" fill="#70d030" stroke="#409010" stroke-width="0.6"/>
<rect x="147.3" y="746.0" width="13.3" height="2" fill="#333"/>
</g>
<svg x="292" y="38" width="843" height="751" viewBox="292 38 843 751" overflow="hidden">
<rect x="292" y="38" width="843" height="751" fill="url(#g3d)"/>
<rect x="292" y="38" width="843" height="1" fill="#2a2a56"/>
<line x1="292.00" y1="392.00" x2="1079.00" y2="392.00" stroke="#dc6460" stroke-width="2.00"/>
<line x1="555.00" y1="38.00" x2="555.00" y2="789.00" stroke="#80f080" stroke-width="2.00"/>
<path d="M555 230 A162 162 0 0 1 717 392" fill="none" stroke="#0000f0" stroke-width="2" stroke-dasharray="11.5 4.5" stroke-dashoffset="10"/>
<path d="M717 392 A162 162 0 0 1 555 554" fill="none" stroke="#0000f0" stroke-width="2" stroke-dasharray="11.5 4.5" stroke-dashoffset="0"/>
<path d="M555 554 A162 162 0 0 1 393 392" fill="none" stroke="#0000f0" stroke-width="2" stroke-dasharray="11.5 4.5" stroke-dashoffset="0.6"/>
<path d="M393 392 A162 162 0 0 1 555 230" fill="none" stroke="#0000f0" stroke-width="2" stroke-dasharray="11.5 4.5" stroke-dashoffset="4"/>
<path d="M547.5 297.5 A95 95 0 0 0 547.5 487 L692.5 499.2 A31.5 31.5 0 0 0 725.5 457.5 A211.9 211.9 0 0 1 725.5 326.5 A31.5 31.5 0 0 0 692 285.5 Z" fill="none" stroke="#00ff00" stroke-width="1.8"/>
<circle cx="547.5" cy="297.5" r="4.3" fill="#00ff00"/>
<circle cx="692" cy="285.5" r="4.3" fill="#00ff00"/>
<circle cx="695" cy="317" r="4.3" fill="#00ff00"/>
<circle cx="725.5" cy="326.5" r="4.3" fill="#00ff00"/>
<circle cx="725.5" cy="457.5" r="4.3" fill="#00ff00"/>
<circle cx="695" cy="467.5" r="4.3" fill="#00ff00"/>
<circle cx="692.5" cy="499.2" r="4.3" fill="#00ff00"/>
<circle cx="547.5" cy="487" r="4.3" fill="#00ff00"/>
<circle cx="555" cy="392" r="4.3" fill="#00ff00"/>
<circle cx="927" cy="392" r="4.3" fill="#00ff00"/>
<line x1="555.00" y1="392.00" x2="555.00" y2="617.00" stroke="#0018ff" stroke-width="2.00"/>
<line x1="927.00" y1="392.00" x2="927.00" y2="617.00" stroke="#0018ff" stroke-width="2.00"/>
<line x1="556.00" y1="593.00" x2="681.00" y2="593.00" stroke="#0018ff" stroke-width="2.00"/>
<line x1="798.00" y1="593.00" x2="926.00" y2="593.00" stroke="#0018ff" stroke-width="2.00"/>
<path d="M556.00 593.00 L569.00 589.00 L569.00 597.00 Z" fill="#0018ff"/>
<path d="M926.00 593.00 L913.00 597.00 L913.00 589.00 Z" fill="#0018ff"/>
<text x="691" y="600.7" font-size="20" fill="#1830f0" textLength="99" lengthAdjust="spacingAndGlyphs">105.25 mm</text>
<line x1="555.00" y1="392.00" x2="1068.00" y2="392.00" stroke="#ffff00" stroke-width="2.00"/>
<line x1="695.00" y1="317.00" x2="979.00" y2="317.00" stroke="#ffff00" stroke-width="2.00"/>
<line x1="695.00" y1="467.50" x2="979.00" y2="467.50" stroke="#ffff00" stroke-width="2.00"/>
<line x1="692.00" y1="285.50" x2="1061.70" y2="254.60" stroke="#ffff00" stroke-width="1.99"/>
<line x1="872.00" y1="250.00" x2="872.00" y2="317.00" stroke="#ffff00" stroke-width="2.00"/>
<path d="M872.00 317.00 L868.00 304.00 L876.00 304.00 Z" fill="#ffff00"/>
<line x1="872.00" y1="424.00" x2="872.00" y2="392.00" stroke="#ffff00" stroke-width="2.00"/>
<path d="M872.00 392.00 L876.00 405.00 L868.00 405.00 Z" fill="#ffff00"/>
<text x="872.50" y="191.00" font-size="20" fill="#ffff00" stroke="url(#g3d)" stroke-width="0.35" text-anchor="middle" dominant-baseline="central" transform="rotate(-90.00 872.50 191.00)">21.385 mm</text>
<line x1="956.00" y1="239.00" x2="956.00" y2="317.00" stroke="#ffff00" stroke-width="2.00"/>
<path d="M956.00 317.00 L952.00 304.00 L960.00 304.00 Z" fill="#ffff00"/>
<line x1="956.00" y1="499.00" x2="956.00" y2="467.50" stroke="#ffff00" stroke-width="2.00"/>
<path d="M956.00 467.50 L960.00 480.50 L952.00 480.50 Z" fill="#ffff00"/>
<text x="956.00" y="186.80" font-size="20" fill="#ffff00" stroke="url(#g3d)" stroke-width="0.35" text-anchor="middle" dominant-baseline="central" transform="rotate(-90.00 956.00 186.80)">42.77 mm</text>
<path d="M1060.00 392.00 A1642 1642 0 0 0 1059.09 337.30 M1057.95 310.00 A1642 1642 0 0 0 1054.43 256.89" fill="none" stroke="#ffff00" stroke-width="2"/>
<path d="M1054.43 256.89 L1059.49 269.51 L1051.51 270.17 Z" fill="#ffff00"/>
<path d="M1060.00 392.00 L1056.00 379.00 L1064.00 379.00 Z" fill="#ffff00"/>
<text x="1058.60" y="324.50" font-size="20" fill="#ffff00" stroke="url(#g3d)" stroke-width="0.35" text-anchor="middle" dominant-baseline="central" transform="rotate(0.00 1058.60 324.50)">4.72 °</text>
<line x1="416.22" y1="331.95" x2="642.45" y2="429.84" stroke="#ffff00" stroke-width="1.84"/>
<path d="M467.55 354.16 L481.07 355.66 L477.90 363.00 Z" fill="#ffff00"/>
<path d="M642.45 429.84 L628.93 428.34 L632.10 421.00 Z" fill="#ffff00"/>
<text x="363.88" y="309.31" font-size="20" fill="#ffff00" stroke="url(#g3d)" stroke-width="0.35" text-anchor="middle" dominant-baseline="central" transform="rotate(23.40 363.88 309.31)">Ø54.1 mm</text>
<line x1="431.54" y1="497.52" x2="590.58" y2="361.59" stroke="#ffff00" stroke-width="1.52"/>
<line x1="660.82" y1="301.56" x2="678.46" y2="286.48" stroke="#ffff00" stroke-width="1.52"/>
<path d="M431.54 497.52 L438.82 486.03 L444.02 492.11 Z" fill="#ffff00"/>
<path d="M678.46 286.48 L671.18 297.97 L665.98 291.89 Z" fill="#ffff00"/>
<text x="625.70" y="331.57" font-size="20" fill="#ffff00" stroke="url(#g3d)" stroke-width="0.35" text-anchor="middle" dominant-baseline="central" transform="rotate(-40.52 625.70 331.57)">Ø92 mm</text>
<line x1="695.00" y1="317.00" x2="781.00" y2="234.03" stroke="#ffff00" stroke-width="1.44"/>
<path d="M717.67 295.13 L711.09 307.03 L705.54 301.28 Z" fill="#ffff00"/>
<text x="809.79" y="206.26" font-size="20" fill="#ffff00" stroke="url(#g3d)" stroke-width="0.35" text-anchor="middle" dominant-baseline="central" transform="rotate(-43.97 809.79 206.26)">R9 mm</text>
<line x1="927.00" y1="392.00" x2="680.01" y2="449.09" stroke="#ffff00" stroke-width="1.95"/>
<path d="M722.40 439.29 L734.16 432.47 L735.96 440.26 Z" fill="#ffff00"/>
<text x="634.67" y="460.72" font-size="20" fill="#ffff00" stroke="url(#g3d)" stroke-width="0.35" text-anchor="middle" dominant-baseline="central" transform="rotate(-13.01 634.67 460.72)" textLength="73" lengthAdjust="spacingAndGlyphs">R60 mm</text>
<g fill="none" stroke="#ff2800" stroke-width="2.1" stroke-linecap="round"><path d="M545 310.8 L555.5 320.8"/><path d="M542 314.40000000000003 Q553 311.8 551.3 323.40000000000003"/></g>
<g fill="none" stroke="#ff2800" stroke-width="2.1" stroke-linecap="round"><path d="M690.1 298.6 L700.6 308.6"/><path d="M687.1 302.20000000000005 Q698.1 299.6 696.4 311.20000000000005"/></g>
<g fill="none" stroke="#ff2800" stroke-width="2.1" stroke-linecap="round"><path d="M740 326.7 L750.5 336.7"/><path d="M737 330.3 Q748 327.7 746.3 339.3"/></g>
<g fill="none" stroke="#ff2800" stroke-width="2.1" stroke-linecap="round"><path d="M541 500.7 L551.5 510.7"/><path d="M538 504.3 Q549 501.7 547.3 513.3"/></g>
<g fill="none" stroke="#ff2800" stroke-width="2.1" stroke-linecap="round"><path d="M689.4 474 L699.9 484"/><path d="M686.4 477.6 Q697.4 475 695.6999999999999 486.6"/></g>
<g fill="none" stroke="#ff2800" stroke-width="2.1" stroke-linecap="round"><path d="M739.6 446.1 L750.1 456.1"/><path d="M736.6 449.70000000000005 Q747.6 447.1 745.9 458.70000000000005"/></g>
<path d="M920 379.3 Q919.5 370 923 368.5 Q927 366.5 932.6 366.9" fill="none" stroke="#ff2800" stroke-width="2.2" stroke-linecap="round"/><circle cx="922.5" cy="369" r="2" fill="#ff2800"/>
<rect x="731" y="502.2" width="8" height="1.8" fill="#ff2800"/><rect x="731" y="506" width="8" height="1.8" fill="#ff2800"/>
<text x="744" y="513" font-size="18" style="font-family:Liberation Serif,serif;font-weight:bold" fill="#ff2800">13</text>
<rect x="731" y="273.2" width="8" height="1.8" fill="#ff2800"/><rect x="731" y="277" width="8" height="1.8" fill="#ff2800"/>
<text x="744" y="284" font-size="18" style="font-family:Liberation Serif,serif;font-weight:bold" fill="#ff2800">13</text>
</svg>
</svg></body></html>
